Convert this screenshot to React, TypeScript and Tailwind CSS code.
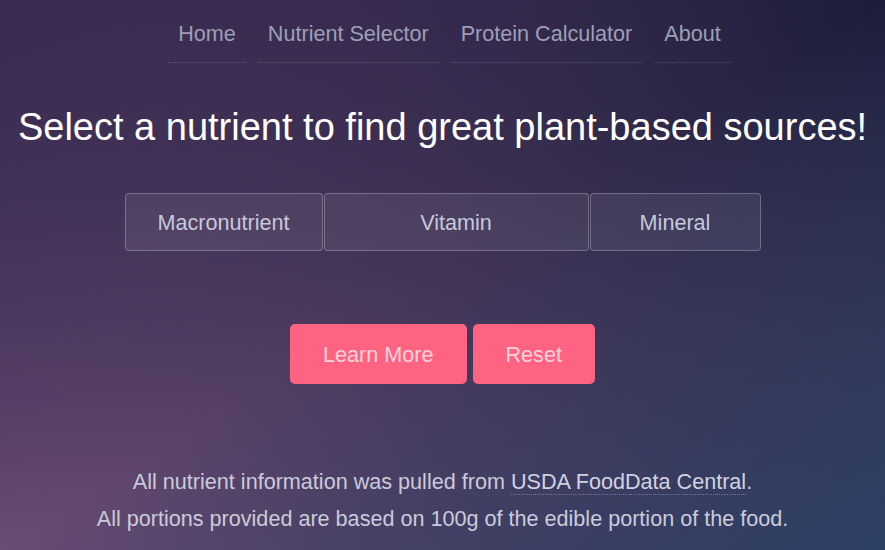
import { useState } from "react";

const links = ["Home", "Nutrient Selector", "Protein Calculator", "About"];

const categories = [
  { label: "Macronutrient", width: "w-[198px]" },
  { label: "Vitamin", width: "w-[265px]" },
  { label: "Mineral", width: "w-[171px]" },
];

export default function App() {
  const [picked, setPicked] = useState<string | null>(null);

  return (
    <div className="min-h-[550px] w-full overflow-hidden bg-[linear-gradient(to_bottom_right,#3b2b52_0%,transparent_50%,#2d4064_100%),linear-gradient(to_top_right,#6a4c74,#1c1d3a)] font-[family-name:'Liberation_Sans',Arial,sans-serif] text-[21.6px]">
      <nav className="flex justify-center gap-[12px] pl-[14px]">
        {links.map((l) => (
          <a
            key={l}
            href="#"
            className="px-[10px] pt-[21px] pb-[16px] leading-[25px] text-[#9d9fb6] border-b border-dotted border-white/20"
          >
            {l}
          </a>
        ))}
      </nav>

      <h1 className="mt-[41px] text-center text-[38px] leading-[46px] text-white">
        Select a nutrient to find great plant-based sources!
      </h1>

      <div className="mt-[43px] flex justify-center gap-[1px]">
        {categories.map((c) => (
          <button
            key={c.label}
            type="button"
            onClick={() => setPicked(c.label)}
            className={`${c.width} h-[58px] pt-[2px] rounded-[4px] border border-white/25 text-[#c6c8dc] ${
              picked === c.label ? "bg-white/20" : "bg-white/[0.07]"
            }`}
          >
            {c.label}
          </button>
        ))}
      </div>

      <div className="mt-[73px] flex justify-center gap-[6px]">
        <button type="button" className="h-[60px] px-[33px] pt-[3px] rounded-[5px] bg-[#fe6482] text-[#ffd2dc]">
          Learn More
        </button>
        <button
          type="button"
          onClick={() => setPicked(null)}
          className="h-[60px] px-[33px] pt-[3px] rounded-[5px] bg-[#fe6482] text-[#ffd2dc]"
        >
          Reset
        </button>
      </div>

      <div className="mt-[79px] text-center leading-[37px] text-[#cbcada]">
        <p>
          All nutrient information was pulled from{" "}
          <a href="#" className="border-b border-dotted border-white/30 text-[#d3d2e2]">
            USDA FoodData Central
          </a>
          .
        </p>
        <p>All portions provided are based on 100g of the edible portion of the food.</p>
      </div>
    </div>
  );
}
